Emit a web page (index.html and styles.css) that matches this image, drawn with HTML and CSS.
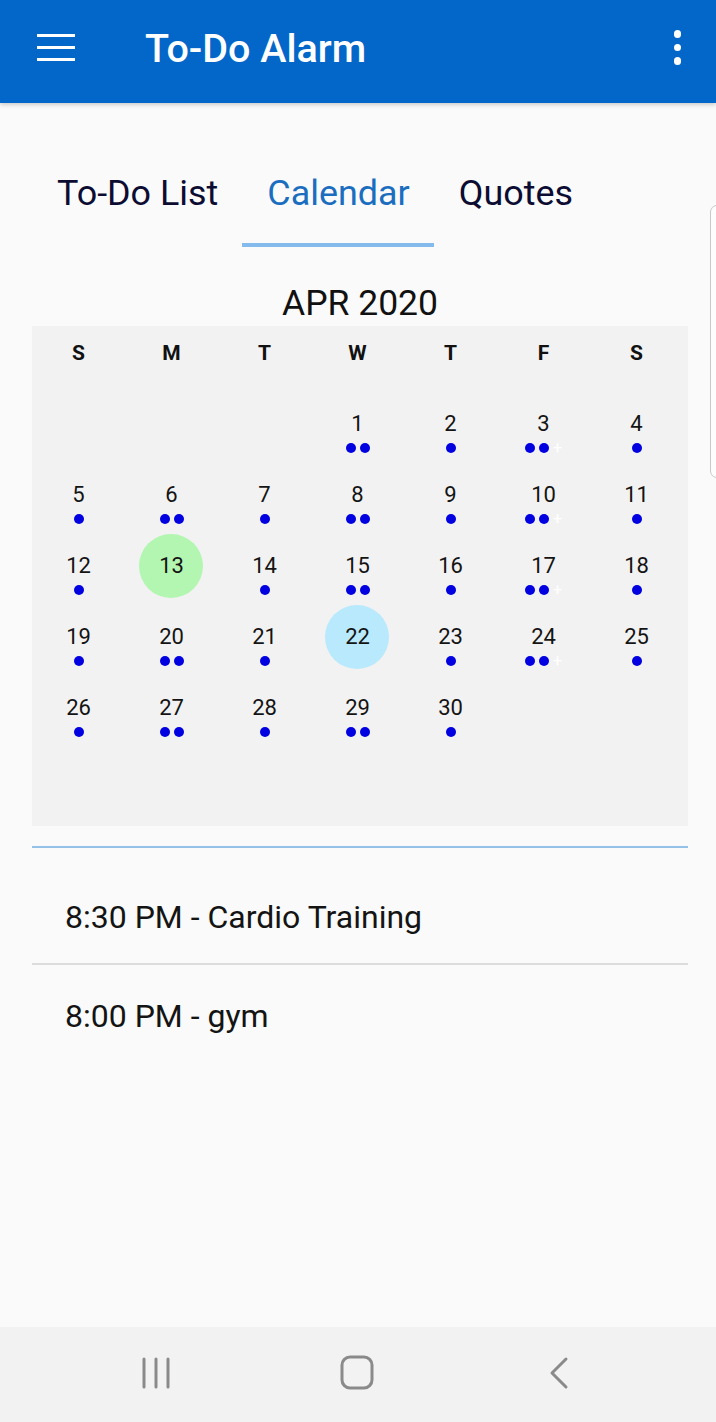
FILE: index.html
```html
<!DOCTYPE html>
<html>
<head>
<meta charset="utf-8">
<link rel="stylesheet" href="styles.css">
</head>
<body>
<header class="appbar">
  <span class="hamburger"><i></i><i></i><i></i></span>
  <h1 class="title">To-Do Alarm</h1>
  <span class="kebab"><i></i><i></i><i></i></span>
</header>

<main class="content">
  <nav class="tabs">
    <div class="tab">To-Do List</div>
    <div class="tab active">Calendar</div>
    <div class="tab">Quotes</div>
  </nav>

  <div class="month">APR 2020</div>

  <section class="calendar">
    <div class="weekdays">
      <span>S</span><span>M</span><span>T</span><span>W</span><span>T</span><span>F</span><span>S</span>
    </div>
    <div class="days">
      <div class="day"></div>
      <div class="day"></div>
      <div class="day"></div>
      <div class="day"><span class="num">1</span><span class="dots"><b></b><b></b></span></div>
      <div class="day"><span class="num">2</span><span class="dots"><b></b></span></div>
      <div class="day"><span class="num">3</span><span class="dots more"><b></b><b></b><em>+</em></span></div>
      <div class="day"><span class="num">4</span><span class="dots"><b></b></span></div>

      <div class="day"><span class="num">5</span><span class="dots"><b></b></span></div>
      <div class="day"><span class="num">6</span><span class="dots"><b></b><b></b></span></div>
      <div class="day"><span class="num">7</span><span class="dots"><b></b></span></div>
      <div class="day"><span class="num">8</span><span class="dots"><b></b><b></b></span></div>
      <div class="day"><span class="num">9</span><span class="dots"><b></b></span></div>
      <div class="day"><span class="num">10</span><span class="dots more"><b></b><b></b><em>+</em></span></div>
      <div class="day"><span class="num">11</span><span class="dots"><b></b></span></div>

      <div class="day"><span class="num">12</span><span class="dots"><b></b></span></div>
      <div class="day"><span class="num today">13</span></div>
      <div class="day"><span class="num">14</span><span class="dots"><b></b></span></div>
      <div class="day"><span class="num">15</span><span class="dots"><b></b><b></b></span></div>
      <div class="day"><span class="num">16</span><span class="dots"><b></b></span></div>
      <div class="day"><span class="num">17</span><span class="dots more"><b></b><b></b><em>+</em></span></div>
      <div class="day"><span class="num">18</span><span class="dots"><b></b></span></div>

      <div class="day"><span class="num">19</span><span class="dots"><b></b></span></div>
      <div class="day"><span class="num">20</span><span class="dots"><b></b><b></b></span></div>
      <div class="day"><span class="num">21</span><span class="dots"><b></b></span></div>
      <div class="day"><span class="num selected">22</span></div>
      <div class="day"><span class="num">23</span><span class="dots"><b></b></span></div>
      <div class="day"><span class="num">24</span><span class="dots more"><b></b><b></b><em>+</em></span></div>
      <div class="day"><span class="num">25</span><span class="dots"><b></b></span></div>

      <div class="day"><span class="num">26</span><span class="dots"><b></b></span></div>
      <div class="day"><span class="num">27</span><span class="dots"><b></b><b></b></span></div>
      <div class="day"><span class="num">28</span><span class="dots"><b></b></span></div>
      <div class="day"><span class="num">29</span><span class="dots"><b></b><b></b></span></div>
      <div class="day"><span class="num">30</span><span class="dots"><b></b></span></div>
    </div>
  </section>

  <ul class="events">
    <li>8:30 PM - Cardio Training</li>
    <li>8:00 PM - gym</li>
  </ul>
</main>

<div class="edge-handle"></div>

<footer class="navbar">
  <svg class="nav-icon" width="32" height="34" viewBox="0 0 32 34"><g stroke="#8a8a8a" stroke-width="3" stroke-linecap="round"><line x1="4" y1="3" x2="4" y2="31"/><line x1="16" y1="3" x2="16" y2="31"/><line x1="28" y1="3" x2="28" y2="31"/></g></svg>
  <svg class="nav-icon" width="34" height="36" viewBox="0 0 34 36"><rect x="2" y="2" width="30" height="31" rx="8" fill="none" stroke="#8a8a8a" stroke-width="3"/></svg>
  <svg class="nav-icon" width="24" height="34" viewBox="0 0 24 34"><polyline points="19,3 5,17 19,31" fill="none" stroke="#8a8a8a" stroke-width="3" stroke-linecap="round" stroke-linejoin="round"/></svg>
</footer>
</body>
</html>
```

FILE: styles.css
```css
* { box-sizing: border-box; }

html, body { margin: 0; padding: 0; }

body {
  width: 716px;
  height: 1422px;
  background: #fafafa;
  font-family: Roboto, "Noto Sans", "Liberation Sans", sans-serif;
  display: flex;
  flex-direction: column;
  position: relative;
  overflow: hidden;
}

/* App bar */
.appbar {
  height: 103px;
  flex: none;
  background: #0367c9;
  display: flex;
  align-items: center;
  padding: 0 35px 0 37px;
  box-shadow: 0 2px 4px rgba(0,0,0,0.18);
  position: relative;
  z-index: 1;
}

.hamburger {
  width: 38px;
  display: flex;
  flex-direction: column;
  gap: 8.5px;
  margin-top: -8px;
}
.hamburger i {
  display: block;
  height: 3.5px;
  background: #fff;
}

.title {
  margin: 0 0 0 70px;
  flex: 1;
  color: #fff;
  font-size: 39.5px;
  font-weight: 500;
  line-height: 1;
  margin-top: -6px;
}

.kebab {
  display: flex;
  flex-direction: column;
  gap: 6px;
  margin-top: -8px;
}
.kebab i {
  display: block;
  width: 7.5px;
  height: 7.5px;
  border-radius: 50%;
  background: #fff;
}

/* Content */
.content {
  padding: 0 28px 0 32px;
}

.tabs {
  display: flex;
  margin-top: 39px;
}
.tab {
  height: 105px;
  padding: 0 24px 0 25px;
  display: flex;
  align-items: center;
  font-size: 35.9px;
  color: #0c0c33;
  border-bottom: 4px solid transparent;
}
.tab.active {
  color: #1b6ebf;
  border-bottom-color: #84bbec;
}

.month {
  margin: 36px 0 3px;
  height: 40px;
  line-height: 40px;
  text-align: center;
  font-size: 35.5px;
  color: #111;
}

.calendar {
  background: #f2f2f2;
  padding-bottom: 12px;
}

.weekdays {
  display: grid;
  grid-template-columns: repeat(7, 93px);
  height: 62px;
  padding-top: 14px;
}
.weekdays span {
  text-align: center;
  font-size: 21px;
  font-weight: 700;
  line-height: 26px;
  color: #111;
}

.days {
  display: grid;
  grid-template-columns: repeat(7, 93px);
  grid-template-rows: repeat(6, 71px);
}

.day {
  display: flex;
  flex-direction: column;
  align-items: center;
  padding-top: 22px;
}

.num {
  position: relative;
  font-size: 22px;
  line-height: 27px;
  color: #141414;
  z-index: 0;
}
.num.today::before,
.num.selected::before {
  content: "";
  position: absolute;
  left: 50%;
  top: 50%;
  width: 64px;
  height: 64px;
  margin: -32px 0 0 -32px;
  border-radius: 50%;
  z-index: -1;
}
.num.today::before { background: #b3f6b1; }
.num.selected::before { background: #b8e9fc; }

.dots {
  display: flex;
  align-items: center;
  gap: 4px;
  margin-top: 6px;
  height: 10px;
}
.dots b {
  display: block;
  width: 10px;
  height: 10px;
  border-radius: 50%;
  background: #0000e1;
}
.dots em {
  font-style: normal;
  color: #fff;
  font-size: 16px;
  line-height: 10px;
  width: 10px;
  text-align: center;
}

.events {
  list-style: none;
  margin: 20px 0 0;
  padding: 0;
  border-top: 2px solid #93c1e8;
}
.events li {
  height: 98px;
  display: flex;
  align-items: center;
  padding-left: 33px;
  padding-top: 3px;
  font-size: 32px;
  color: #141414;
}
.events li:first-child {
  margin-top: 19px;
  border-bottom: 2px solid #dcdcdc;
}

.edge-handle {
  position: absolute;
  left: 710px;
  top: 205px;
  width: 14px;
  height: 273px;
  border: 1.5px solid #c9c9c9;
  border-radius: 9px;
  background: #fdfdfd;
}

/* bottom nav */
.navbar {
  margin-top: auto;
  height: 95px;
  flex: none;
  background: #f2f2f2;
  display: flex;
  align-items: center;
  padding-bottom: 4px;
}
.nav-icon:nth-child(1) { margin-left: 140px; }
.nav-icon:nth-child(2) { margin-left: 168px; }
.nav-icon:nth-child(3) { margin-left: 173px; }
```
